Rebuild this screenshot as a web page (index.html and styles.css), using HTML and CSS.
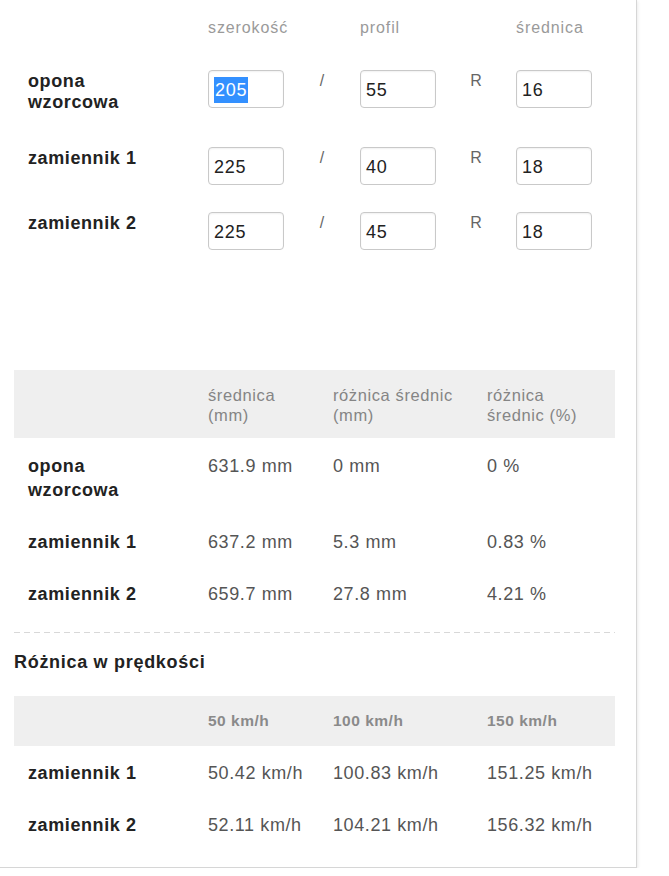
FILE: index.html
```html
<!DOCTYPE html>
<html lang="pl">
<head>
<meta charset="utf-8">
<title>Kalkulator opon</title>
<link rel="stylesheet" href="styles.css">
</head>
<body>
<div class="card">
  <div class="tire-form">
    <div class="frow form-head">
      <span></span>
      <span class="col-h">szerokość</span>
      <span></span>
      <span class="col-h">profil</span>
      <span></span>
      <span class="col-h">średnica</span>
    </div>
    <div class="frow frow-tall">
      <span class="lbl">opona wzorcowa</span>
      <div class="box"><span class="sel">205</span></div>
      <span class="sep">/</span>
      <div class="box">55</div>
      <span class="sep">R</span>
      <div class="box">16</div>
    </div>
    <div class="frow">
      <span class="lbl">zamiennik 1</span>
      <div class="box">225</div>
      <span class="sep">/</span>
      <div class="box">40</div>
      <span class="sep">R</span>
      <div class="box">18</div>
    </div>
    <div class="frow">
      <span class="lbl">zamiennik 2</span>
      <div class="box">225</div>
      <span class="sep">/</span>
      <div class="box">45</div>
      <span class="sep">R</span>
      <div class="box">18</div>
    </div>
  </div>

  <div class="tbl t-diam">
    <div class="trow thead">
      <span></span>
      <span>średnica (mm)</span>
      <span>różnica średnic (mm)</span>
      <span>różnica średnic (%)</span>
    </div>
    <div class="trow">
      <span class="lbl">opona wzorcowa</span>
      <span class="val">631.9 mm</span>
      <span class="val">0 mm</span>
      <span class="val">0 %</span>
    </div>
    <div class="trow">
      <span class="lbl">zamiennik 1</span>
      <span class="val">637.2 mm</span>
      <span class="val">5.3 mm</span>
      <span class="val">0.83 %</span>
    </div>
    <div class="trow">
      <span class="lbl">zamiennik 2</span>
      <span class="val">659.7 mm</span>
      <span class="val">27.8 mm</span>
      <span class="val">4.21 %</span>
    </div>
  </div>

  <div class="dash"></div>

  <h3 class="sec-title">Różnica w prędkości</h3>

  <div class="tbl t-speed">
    <div class="trow thead">
      <span></span>
      <span>50 km/h</span>
      <span>100 km/h</span>
      <span>150 km/h</span>
    </div>
    <div class="trow">
      <span class="lbl">zamiennik 1</span>
      <span class="val">50.42 km/h</span>
      <span class="val">100.83 km/h</span>
      <span class="val">151.25 km/h</span>
    </div>
    <div class="trow">
      <span class="lbl">zamiennik 2</span>
      <span class="val">52.11 km/h</span>
      <span class="val">104.21 km/h</span>
      <span class="val">156.32 km/h</span>
    </div>
  </div>
</div>
</body>
</html>
```

FILE: styles.css
```css
html, body {
  margin: 0;
  padding: 0;
  background: #ffffff;
}

body {
  font-family: "Liberation Sans", Arial, sans-serif;
  color: #333;
}

.card {
  box-sizing: border-box;
  width: 637px;
  height: 868px;
  background: #fff;
  border-right: 1px solid #d6d6d6;
  border-bottom: 1px solid #d6d6d6;
  box-shadow: 1px 1px 3px rgba(0, 0, 0, 0.08);
  padding: 18px 0 0 14px;
}

/* ---------- form ---------- */
.tire-form {
  margin-left: -14px;
}

.frow {
  display: grid;
  grid-template-columns: 208px 76px 76px 76px 80px 76px;
  align-items: start;
  padding-bottom: 27px;
}

.frow-tall {
  padding-bottom: 34px;
}

.form-head {
  padding-bottom: 32px;
}

.col-h {
  font-size: 16px;
  line-height: 20px;
  letter-spacing: 0.9px;
  color: #9a9a9a;
  white-space: nowrap;
}

.lbl {
  display: block;
  max-width: 128px;
  font-weight: bold;
  font-size: 18px;
  line-height: 21px;
  letter-spacing: 0.6px;
  color: #222;
}

.frow .lbl {
  padding-left: 28px;
  margin-top: 1px;
}

.box {
  box-sizing: border-box;
  height: 38px;
  border: 1px solid #c9c9c9;
  border-radius: 4px;
  box-shadow: inset 0 1px 2px rgba(0, 0, 0, 0.06);
  padding: 1px 0 0 5px;
  font-size: 18px;
  line-height: 36px;
  letter-spacing: 0.8px;
  color: #222;
}

.sel {
  background: #3390ff;
  color: #fff;
  padding: 3px 1px 3px 1px;
}

.sep {
  text-align: center;
  font-size: 16px;
  line-height: 20px;
  padding-top: 1px;
  color: #666;
}

/* ---------- tables ---------- */
.tbl {
  width: 601px;
}

.t-diam {
  margin-top: 93px;
}

.trow {
  display: grid;
  grid-template-columns: 194px 125px 154px 128px;
  align-items: start;
  padding: 16px 0 12px 0;
}

.trow .lbl {
  padding-left: 14px;
  line-height: 24px;
}

.val {
  font-size: 18px;
  line-height: 24px;
  letter-spacing: 0.6px;
  color: #555;
  white-space: nowrap;
}

.thead {
  background: #efefef;
  padding: 15px 0 13px 0;
}

.t-diam .thead span {
  font-size: 16.5px;
  line-height: 20px;
  letter-spacing: 0.6px;
  color: #858585;
  max-width: 105px;
}

.t-diam .thead span:nth-child(3) {
  max-width: 135px;
}

.t-speed .trow {
  padding: 15px 0 13px 0;
}

.t-speed .thead {
  padding: 14px 0 14px 0;
  height: 50px;
  box-sizing: border-box;
  align-items: center;
}

.t-speed .thead span {
  font-size: 15.5px;
  font-weight: bold;
  line-height: 22px;
  letter-spacing: 0.5px;
  color: #8a8a8a;
}

.dash {
  width: 601px;
  height: 1px;
  margin-top: 14px;
  background: repeating-linear-gradient(to right, #d8d8d8 0 6px, transparent 6px 10px);
}

.sec-title {
  margin: 17px 0 22px 0;
  font-size: 18px;
  line-height: 24px;
  letter-spacing: 0.7px;
  font-weight: bold;
  color: #222;
}
```
